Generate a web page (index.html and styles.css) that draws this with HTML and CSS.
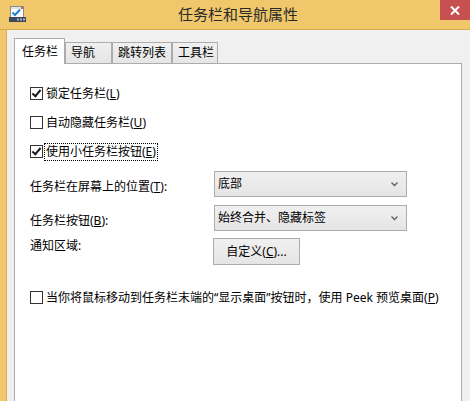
FILE: index.html
```html
<!DOCTYPE html>
<html lang="zh-CN">
<head>
    <meta charset="UTF-8">
    <meta name="viewport" content="width=device-width, initial-scale=1.0">
    <title>任务栏和导航属性</title>
    <link rel="stylesheet" href="styles.css">
</head>
<body>
    <div class="window">
        <div class="titlebar">
            <svg class="app-icon" width="17" height="16" viewBox="0 0 17 16">
                <rect x="1.5" y="0.5" width="13" height="11" fill="#ffffff" stroke="#8c8c8c"/>
                <rect x="2" y="1" width="12" height="2" fill="#e4e4e4"/>
                <rect x="12" y="1" width="2" height="2" fill="#d9534f"/>
                <path d="M3.5 6.5 L6 9 L11 3.5" fill="none" stroke="#1d86d6" stroke-width="2"/>
                <rect x="0" y="11" width="17" height="5" fill="#3e4a5c"/>
                <rect x="8" y="12.5" width="2" height="2" fill="#a9b6c6"/>
                <rect x="11" y="12.5" width="2" height="2" fill="#a9b6c6"/>
                <rect x="14" y="12.5" width="2" height="2" fill="#a9b6c6"/>
            </svg>
            <div class="title">任务栏和导航属性</div>
            <div class="close-btn">
                <svg width="10" height="9" viewBox="0 0 10 9">
                    <path d="M1 0.5 L9 8.5 M9 0.5 L1 8.5" stroke="#ffffff" stroke-width="2"/>
                </svg>
            </div>
        </div>

        <div class="frame">
            <div class="frame-edge"></div>
            <div class="client">
                <div class="tabs">
                    <div class="tab active">任务栏</div>
                    <div class="tab tab-nav">导航</div>
                    <div class="tab tab-jump">跳转列表</div>
                    <div class="tab tab-tools">工具栏</div>
                </div>

                <div class="panel">
                    <div class="check-list">
                        <div class="check-row">
                            <span class="box checked"></span>
                            <span>锁定任务栏(<u>L</u>)</span>
                        </div>
                        <div class="check-row">
                            <span class="box"></span>
                            <span>自动隐藏任务栏(<u>U</u>)</span>
                        </div>
                        <div class="check-row">
                            <span class="box checked"></span>
                            <span class="focused">使用小任务栏按钮(<u>E</u>)</span>
                        </div>
                    </div>

                    <div class="fields">
                        <div class="field-label label-pos">任务栏在屏幕上的位置(<u>T</u>):</div>
                        <div class="dropdown">
                            <span>底部</span>
                            <svg class="chevron" width="7" height="5" viewBox="0 0 7 5">
                                <path d="M0.5 0.5 L3.5 3.5 L6.5 0.5" fill="none" stroke="#606060" stroke-width="1.3"/>
                            </svg>
                        </div>

                        <div class="field-label label-btn">任务栏按钮(<u>B</u>):</div>
                        <div class="dropdown">
                            <span>始终合并、隐藏标签</span>
                            <svg class="chevron" width="7" height="5" viewBox="0 0 7 5">
                                <path d="M0.5 0.5 L3.5 3.5 L6.5 0.5" fill="none" stroke="#606060" stroke-width="1.3"/>
                            </svg>
                        </div>

                        <div class="field-label label-notify">通知区域:</div>
                        <div class="button-cell">
                            <div class="push-button">自定义(<u>C</u>)...</div>
                        </div>
                    </div>

                    <div class="check-row peek-row">
                        <span class="box"></span>
                        <span>当你将鼠标移动到任务栏末端的“显示桌面”按钮时，使用 Peek 预览桌面(<u>P</u>)</span>
                    </div>
                </div>
            </div>
        </div>
    </div>
</body>
</html>
```

FILE: styles.css
```css
body {
    margin: 0;
    padding: 0;
    background-color: #f0f0f0;
    font-family: "Noto Sans", "Noto Sans CJK SC", sans-serif;
    font-size: 12px;
    line-height: 16px;
    color: #000;
}

.window {
    width: 470px;
    height: 401px;
    overflow: hidden;
    display: flex;
    flex-direction: column;
}

.titlebar {
    height: 29px;
    background-color: #f0c86b;
    border-bottom: 1px solid #d7ac4c;
    display: flex;
    align-items: flex-start;
}

.app-icon {
    margin: 6px 0 0 9px;
}

.title {
    flex: 1;
    text-align: center;
    font-size: 15px;
    line-height: 20px;
    color: #2a2a2a;
    padding: 4px 0 0 10px;
}

.close-btn {
    width: 30px;
    height: 20px;
    background-color: #c75050;
    display: flex;
    align-items: center;
    justify-content: center;
}

.frame {
    flex: 1;
    display: flex;
}

.frame-edge {
    width: 6px;
    background-color: #f0c86b;
    border-right: 1px solid #d7ac4c;
}

.client {
    flex: 1;
    padding: 8px 8px 0 7px;
    display: flex;
    flex-direction: column;
}

.tabs {
    display: flex;
    align-items: flex-end;
    height: 25px;
}

.tab {
    box-sizing: border-box;
    height: 21px;
    border: 1px solid #acacac;
    border-bottom: none;
    background: linear-gradient(#f0f0f0, #e5e5e5);
    padding: 2px 0 0 5px;
    line-height: 16px;
}

.tab.active {
    position: relative;
    z-index: 1;
    width: 51px;
    height: 26px;
    margin-bottom: -1px;
    background: #ffffff;
    padding: 5px 0 0 7px;
}

.tab-nav {
    width: 47px;
}

.tab-jump {
    width: 60px;
}

.tab-tools {
    width: 46px;
}

.panel {
    flex: 1;
    background-color: #ffffff;
    border: 1px solid #acacac;
    border-bottom: none;
    padding: 21px 15px 0 15px;
}

.check-list {
    display: flex;
    flex-direction: column;
    gap: 12px;
}

.check-row {
    display: flex;
    align-items: center;
    height: 17px;
    white-space: nowrap;
}

.box {
    box-sizing: border-box;
    width: 13px;
    height: 13px;
    border: 1px solid #333333;
    background-color: #ffffff;
    margin-right: 3px;
    position: relative;
    flex-shrink: 0;
}

.box.checked::after {
    content: "";
    position: absolute;
    left: 3px;
    top: 0px;
    width: 3px;
    height: 7px;
    border-right: 2px solid #1a1a1a;
    border-bottom: 2px solid #1a1a1a;
    transform: rotate(40deg);
}

.focused {
    outline: 1px dotted #000;
    outline-offset: 0;
    padding: 0 1px;
    margin-left: -1px;
}

.fields {
    display: grid;
    grid-template-columns: 184px 193px;
    row-gap: 8px;
    margin-top: 11px;
}

.field-label {
    align-self: start;
}

.label-pos {
    padding-top: 8px;
}

.label-btn {
    padding-top: 8px;
}

.label-notify {
    margin-top: -1px;
}

.dropdown {
    box-sizing: border-box;
    height: 26px;
    border: 1px solid #acacac;
    background: linear-gradient(#f0f0f0, #e5e5e5);
    display: flex;
    align-items: center;
    justify-content: space-between;
    padding: 0 4px 0 3px;
}

.chevron {
    margin-right: 4px;
}

.button-cell {
    margin-left: -1px;
}

.push-button {
    box-sizing: border-box;
    width: 87px;
    height: 27px;
    margin-top: -1px;
    border: 1px solid #acacac;
    background: linear-gradient(#f0f0f0, #e5e5e5);
    display: flex;
    align-items: center;
    justify-content: center;
}

.peek-row {
    margin-top: 24px;
}
```
